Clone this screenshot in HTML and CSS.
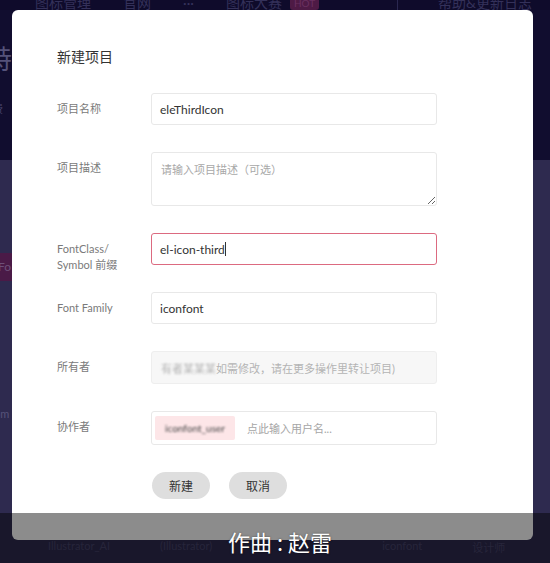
FILE: index.html
```html
<!DOCTYPE html>
<html lang="zh-CN">
<head>
    <meta charset="UTF-8">
    <meta name="viewport" content="width=device-width, initial-scale=1.0">
    <title>新建项目</title>
    <link rel="stylesheet" href="styles.css">
</head>
<body>
    <div class="screen">
        <header class="topnav">
            <span class="nav-item nav-first">图标管理</span>
            <span class="nav-item">官网</span>
            <span class="nav-item nav-dots">···</span>
            <span class="nav-item">图标大赛</span>
            <span class="nav-badge">HOT</span>
            <span class="nav-spacer"></span>
            <span class="nav-divider"></span>
            <span class="nav-item">帮助&amp;更新日志</span>
        </header>
        <div class="hero">
            <div class="hero-title">特</div>
            <div class="hero-sub">费</div>
        </div>
        <div class="content">
            <div class="side-tag">Fo</div>
            <div class="side-text">om</div>
            <div class="bottom-row">
                <span>Illustrator_AI</span>
                <span>(Illustrator)</span>
                <span class="bottom-right">iconfont</span>
                <span>设计师</span>
            </div>
        </div>
    </div>

    <!-- 新建项目弹窗 -->
    <div class="modal">
        <h2 class="modal-title">新建项目</h2>

        <div class="form-row">
            <label class="form-label">项目名称</label>
            <div class="field">eleThirdIcon</div>
        </div>

        <div class="form-row">
            <label class="form-label">项目描述</label>
            <textarea class="field field-area" placeholder="请输入项目描述（可选）"></textarea>
        </div>

        <div class="form-row">
            <label class="form-label">FontClass/<br>Symbol 前缀</label>
            <div class="field field-focus">el-icon-third<span class="caret"></span></div>
        </div>

        <div class="form-row">
            <label class="form-label">Font Family</label>
            <div class="field">iconfont</div>
        </div>

        <div class="form-row">
            <label class="form-label">所有者</label>
            <div class="field field-disabled"><span class="blurred">有者某某某</span>如需修改，请在更多操作里转让项目)</div>
        </div>

        <div class="form-row">
            <label class="form-label">协作者</label>
            <div class="field field-tags">
                <span class="user-tag"><span class="blurred">iconfont_user</span></span>
                <span class="tag-placeholder">点此输入用户名...</span>
            </div>
        </div>

        <div class="form-actions">
            <button class="btn">新建</button>
            <button class="btn">取消</button>
        </div>
    </div>

    <div class="subtitle">
        <span>作曲 : 赵雷</span>
    </div>
</body>
</html>
```

FILE: styles.css
```css
body {
    margin: 0;
    padding: 0;
    width: 550px;
    height: 563px;
    overflow: hidden;
    position: relative;
    background-color: #2f2b4f;
    font-family: 'Lato', 'Noto Sans CJK SC', sans-serif;
}

.screen {
    height: 563px;
    display: flex;
    flex-direction: column;
}

/* top navigation, mostly cut off */
.topnav {
    height: 10px;
    background-color: #0f0b2b;
    display: flex;
    align-items: flex-end;
    overflow: hidden;
    font-size: 14px;
    color: #34315a;
    padding: 0 18px 0 35px;
    gap: 32px;
}

.nav-item {
    line-height: 18px;
    margin-bottom: -2px;
    white-space: nowrap;
}

.nav-badge {
    background-color: #4e1a45;
    color: #6a3060;
    font-size: 10px;
    padding: 0 4px;
    border-radius: 3px;
    margin-left: -24px;
    line-height: 14px;
    margin-bottom: 0;
}

.nav-spacer {
    flex: 1;
}

.nav-divider {
    width: 1px;
    height: 10px;
    background-color: #2a2750;
    margin-right: 8px;
}

.hero {
    height: 150px;
    background-color: #110d2f;
    padding-top: 34px;
    box-sizing: border-box;
}

.hero-title {
    font-size: 26px;
    color: #55527a;
    margin-left: -14px;
    line-height: 30px;
}

.hero-sub {
    font-size: 11px;
    color: #46436a;
    margin-left: -8px;
    margin-top: 26px;
}

.content {
    flex: 1;
    display: flex;
    flex-direction: column;
    background-color: #2e2a4f;
}

.side-tag {
    margin-top: 93px;
    width: 13px;
    height: 28px;
    background-color: #4a1a47;
    color: #6e5078;
    font-size: 12px;
    line-height: 28px;
    overflow: hidden;
    text-indent: -2px;
}

.side-text {
    margin-top: 126px;
    font-size: 11px;
    color: #56537a;
    margin-left: -6px;
}

.bottom-row {
    margin-top: auto;
    height: 24px;
    display: flex;
    align-items: flex-start;
    font-size: 11px;
    color: #47446a;
    padding-left: 48px;
    gap: 50px;
}

.bottom-right {
    margin-left: 120px;
}

/* modal */
.modal {
    position: absolute;
    left: 12px;
    top: 10px;
    width: 521px;
    height: 530px;
    box-sizing: border-box;
    background: #ffffff;
    border-radius: 6px;
    padding: 38px 0 0 45px;
}

.modal-title {
    margin: 0 0 27px;
    font-size: 14px;
    line-height: 18px;
    font-weight: normal;
    color: #333;
}

.form-row {
    display: flex;
    align-items: flex-start;
    margin-bottom: 27px;
}

.form-label {
    width: 94px;
    height: 32px;
    box-sizing: border-box;
    flex-shrink: 0;
    padding-top: 8px;
    font-size: 11px;
    line-height: 16px;
    color: #7a7a7a;
}

.field {
    width: 286px;
    height: 32px;
    box-sizing: border-box;
    border: 1px solid #e8e8e8;
    border-radius: 3px;
    padding: 0 8px;
    display: flex;
    align-items: center;
    font-family: 'Lato', 'Noto Sans CJK SC', sans-serif;
    font-size: 12px;
    color: #333;
    background: #fff;
}

.field-area {
    height: 54px;
    display: block;
    padding: 8px 9px;
    resize: vertical;
    font-size: 11px;
    outline: none;
}

.field-area::placeholder {
    color: #a8a8a8;
}

.field-focus {
    border-color: #dc6a80;
}

.caret {
    display: inline-block;
    width: 1px;
    height: 14px;
    background-color: #333;
}

.field-disabled {
    height: 33px;
    background-color: #f7f7f7;
    border-color: #eeeeee;
    color: #b4b4b4;
    font-size: 11px;
    padding-left: 9px;
}

.blurred {
    filter: blur(1.2px);
}

.field-tags {
    height: 34px;
    padding: 0 3px;
    gap: 12px;
}

.user-tag {
    width: 80px;
    height: 24px;
    background-color: #fde6e8;
    border-radius: 2px;
    display: flex;
    align-items: center;
    justify-content: center;
    font-size: 10px;
    color: #444;
    overflow: hidden;
}

.tag-placeholder {
    font-size: 11px;
    color: #a6a6a6;
}

.form-actions {
    display: flex;
    gap: 19px;
    padding-left: 95px;
    margin-top: 2px;
}

.btn {
    width: 58px;
    height: 27px;
    border: none;
    border-radius: 14px;
    background-color: #dedede;
    color: #333;
    font-family: 'Lato', 'Noto Sans CJK SC', sans-serif;
    font-size: 12px;
    padding: 0;
}

/* video subtitle band */
.subtitle {
    position: absolute;
    left: 0;
    top: 513px;
    width: 550px;
    height: 50px;
    background-color: rgba(0, 0, 0, 0.45);
    text-align: center;
    box-sizing: border-box;
    padding: 14px 0 0 10px;
}

.subtitle span {
    font-family: 'Noto Sans CJK SC', sans-serif;
    font-size: 22px;
    line-height: 28px;
    color: #fff;
    text-shadow: 0 0 2px rgba(0, 0, 0, 0.5);
}
```
